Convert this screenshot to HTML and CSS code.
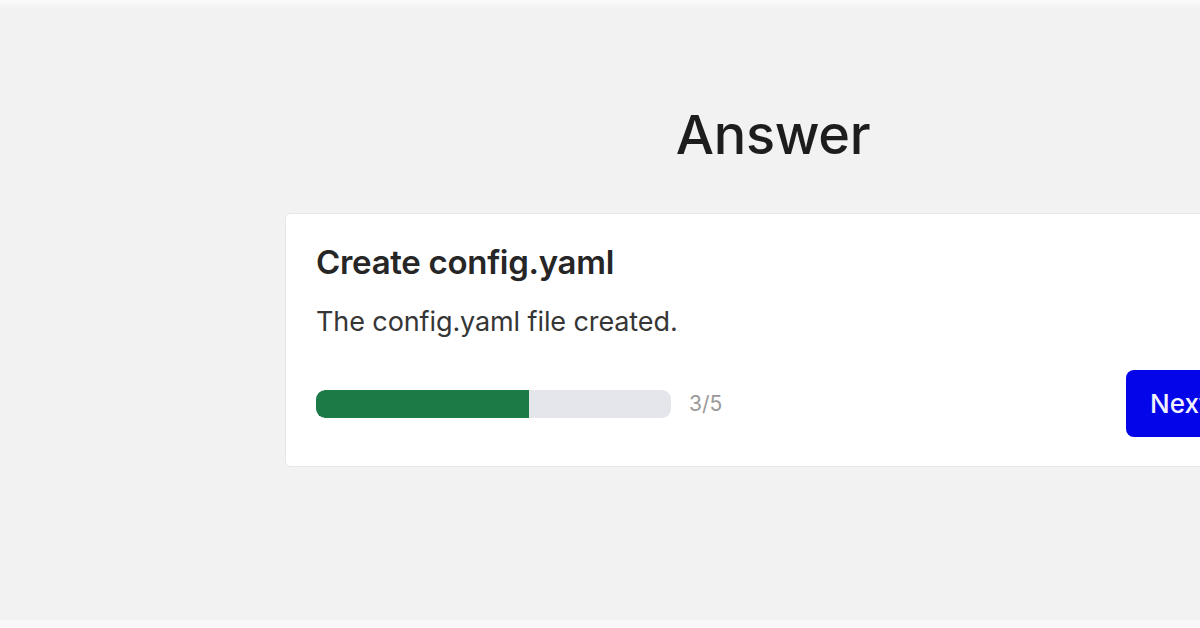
FILE: index.html
```html
<!DOCTYPE html>
<html lang="en">
<head>
<meta charset="utf-8">
<title>Answer</title>
<link rel="stylesheet" href="styles.css">
</head>
<body>
<div class="page">
  <div class="top-band"></div>
  <main class="content">
    <h1 class="heading">Answer</h1>
    <section class="card">
      <h2 class="card-title">Create config.yaml</h2>
      <p class="card-text">The config.yaml file created.</p>
      <div class="card-footer">
        <div class="progress">
          <div class="track"><div class="fill" style="width: 60%"></div></div>
          <span class="count">3/5</span>
        </div>
        <button class="next">Next</button>
      </div>
    </section>
  </main>
  <div class="bottom-band"></div>
</div>
</body>
</html>
```

FILE: styles.css
```css
html, body {
  margin: 0;
  padding: 0;
  width: 1200px;
  height: 628px;
  overflow: hidden;
  background: #f2f2f2;
  font-family: Inter, "Noto Sans", "Liberation Sans", sans-serif;
  color: #222;
}

.page {
  width: 1200px;
  height: 628px;
  display: flex;
  flex-direction: column;
}

.top-band {
  height: 10px;
  background: linear-gradient(#fbfbfb, #f2f2f2);
  flex: none;
}

.content {
  flex: 1;
  width: 976px;
  margin-left: 285px;
  display: flex;
  flex-direction: column;
}

.heading {
  margin: 92px 0 0 0;
  text-align: center;
  font-size: 54px;
  font-weight: 500;
  line-height: 66px;
  color: #1d1d1d;
  letter-spacing: -0.3px;
}

.card {
  margin-top: 45px;
  background: #fff;
  border: 1px solid #e6e6e6;
  border-radius: 6px;
  padding: 28px 30px 29px 30px;
}

.card-title {
  margin: 0;
  font-size: 33px;
  font-weight: 600;
  line-height: 41px;
  color: #262626;
  letter-spacing: -0.3px;
}

.card-text {
  margin: 22px 0 0 0;
  font-size: 27px;
  line-height: 34px;
  color: #363636;
  letter-spacing: -0.1px;
}

.card-footer {
  margin-top: 31px;
  display: flex;
  align-items: center;
  justify-content: space-between;
}

.progress {
  display: flex;
  align-items: center;
  gap: 18px;
}

.track {
  width: 355px;
  height: 28px;
  background: #e4e6eb;
  border-radius: 9px;
  overflow: hidden;
}

.fill {
  height: 100%;
  background: #1b7a46;
  border-radius: 9px 0 0 9px;
}

.count {
  font-size: 21px;
  color: #9a9a9a;
}

.next {
  width: 104px;
  height: 67px;
  border: none;
  border-radius: 8px;
  background: #0505ea;
  color: #f2f2ff;
  font-family: inherit;
  font-size: 26px;
  font-weight: 500;
  padding: 0 0 0 24px;
  text-align: left;
  white-space: nowrap;
}

.bottom-band {
  height: 8px;
  background: #f8f8f8;
  flex: none;
}
```
